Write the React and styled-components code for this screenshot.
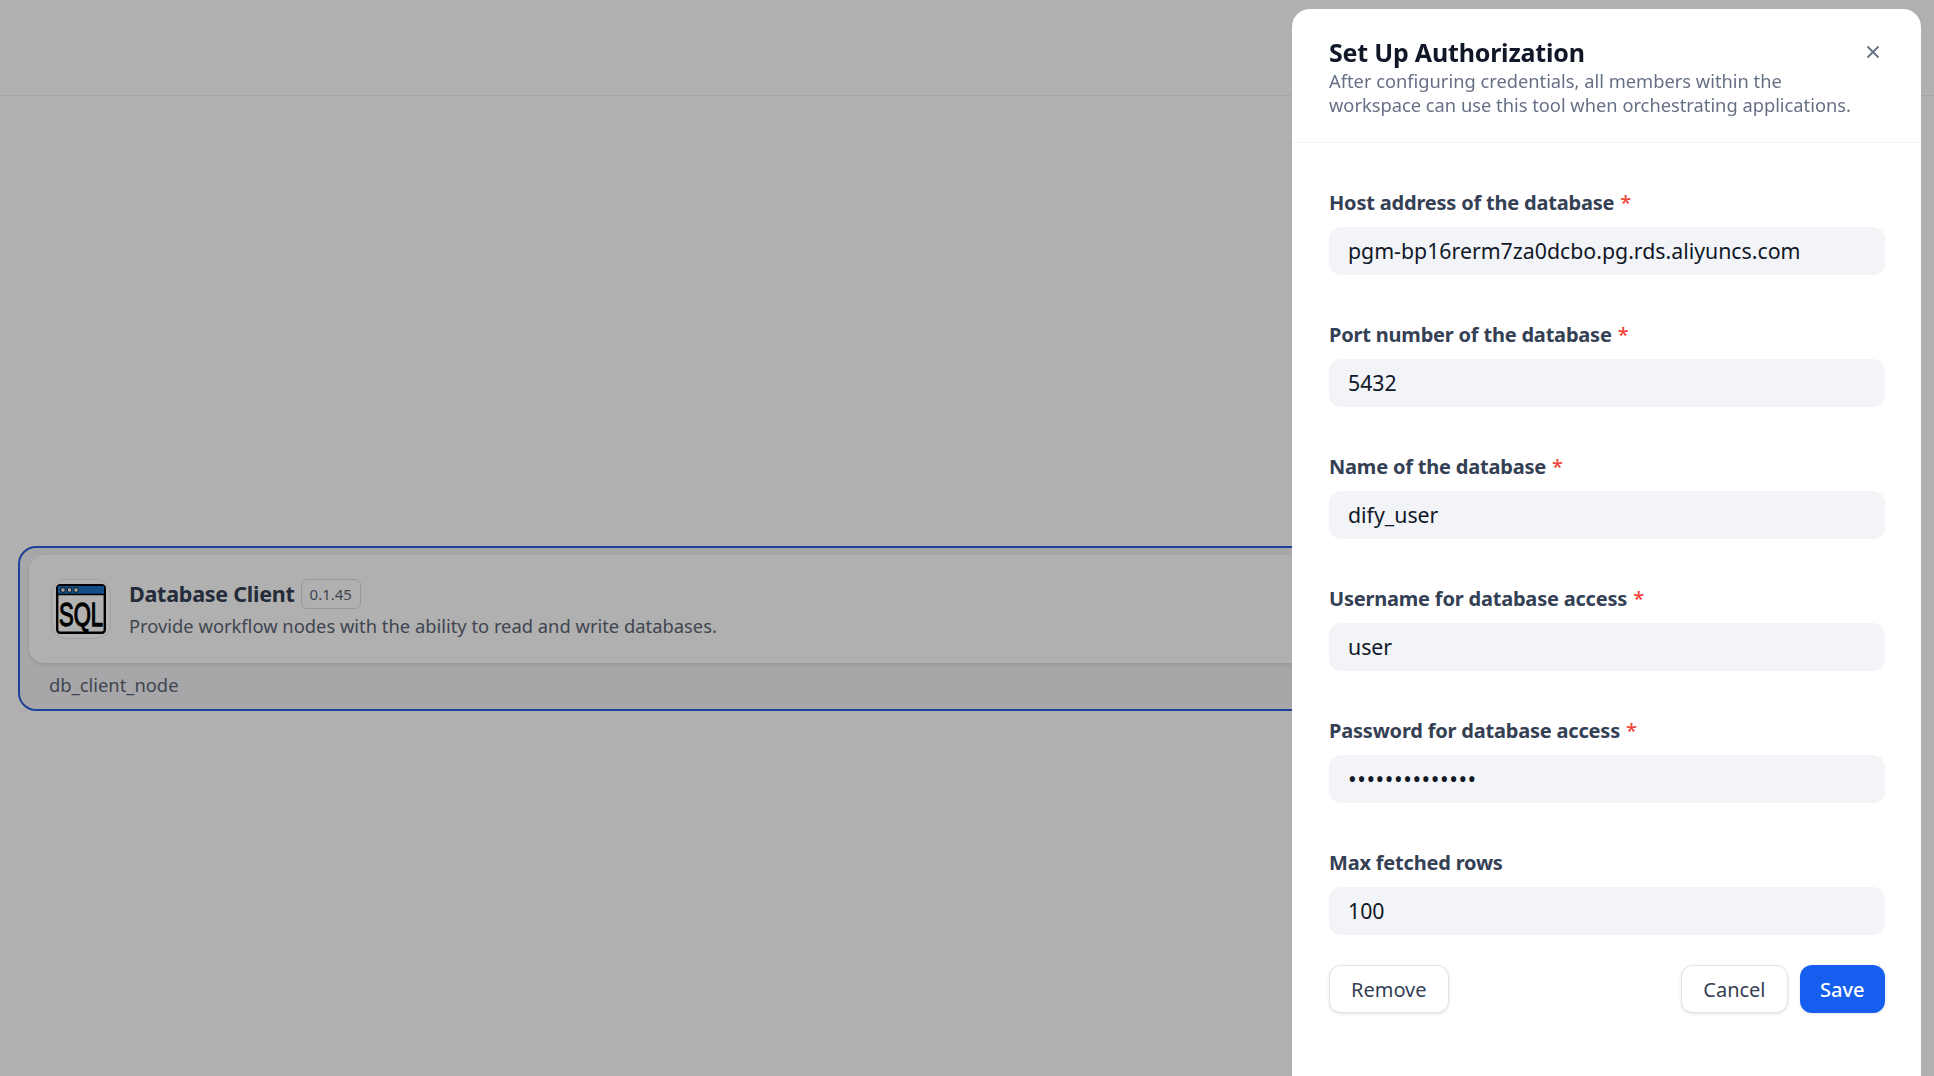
import React from "react";
import styled, { createGlobalStyle } from "styled-components";

const GlobalStyle = createGlobalStyle`
  html, body {
    margin: 0;
    padding: 0;
    height: 100%;
    background: #fff;
    overflow: hidden;
    font-family: "Noto Sans", "Open Sans", sans-serif;
  }
  * { box-sizing: border-box; }
`;

const Page = styled.div`
  height: 1076px;
  background: #fcfcfd;
  overflow: hidden;
`;

const TopBar = styled.div`
  height: 96px;
  border-bottom: 1px solid #eaecf0;
`;

const PluginList = styled.div`
  padding: 450px 0 0 18px;
`;

const PluginCard = styled.div`
  width: 1900px;
  height: 165px;
  padding: 7px 9px 0;
  border: 2px solid #2b5fd9;
  border-radius: 18px;
  background: #f0f0f2;
`;

const CardTop = styled.div`
  display: flex;
  gap: 18px;
  height: 108px;
  padding: 24px 22px;
  background: #fcfcfc;
  border-radius: 15px;
  box-shadow: 0 2px 4px rgba(16, 24, 40, 0.1);
`;

const IconBox = styled.div`
  flex: none;
  width: 60px;
  height: 60px;
  display: flex;
  align-items: center;
  justify-content: center;
  border: 1px solid #e9e9ec;
  border-radius: 15px;
  background: #fff;
`;

const CardText = styled.div`
  display: flex;
  flex-direction: column;
`;

const TitleRow = styled.div`
  display: flex;
  align-items: center;
  gap: 6px;
  height: 30px;
`;

const PluginName = styled.div`
  font-size: 21.5px;
  font-weight: 700;
  letter-spacing: -0.25px;
  line-height: 30px;
  color: #344054;
`;

const VersionBadge = styled.div`
  padding: 0 8px;
  height: 30px;
  line-height: 28px;
  font-size: 15px;
  color: #5b6473;
  border: 1px solid #d8dade;
  border-radius: 6px;
`;

const PluginDesc = styled.div`
  margin-top: 3px;
  font-size: 18.35px;
  line-height: 27px;
  color: #5b6473;
`;

const CardFoot = styled.div`
  padding: 8px 20px 0;
  font-size: 18.35px;
  line-height: 27px;
  color: #5b6473;
`;

const Overlay = styled.div`
  position: fixed;
  inset: 0;
  background: rgba(0, 0, 0, 0.3);
`;

const Panel = styled.div`
  position: fixed;
  top: 9px;
  right: 13px;
  bottom: 0;
  width: 629px;
  background: #fff;
  border-radius: 18px 18px 0 0;
`;

const PanelHead = styled.div`
  position: relative;
  height: 134px;
  padding: 27px 36px 0 37px;
  border-bottom: 1px solid #f2f4f7;
`;

const PanelTitle = styled.div`
  font-size: 25px;
  font-weight: 700;
  letter-spacing: -0.2px;
  line-height: 32px;
  color: #101828;
`;

const PanelDesc = styled.div`
  margin-top: 1px;
  font-size: 18.3px;
  line-height: 24px;
  color: #667085;
`;

const CloseButton = styled.button`
  position: absolute;
  top: 31px;
  right: 36px;
  width: 24px;
  height: 24px;
  padding: 0;
  border: 0;
  background: none;
  display: flex;
  align-items: center;
  justify-content: center;
  color: #667085;
`;

const Form = styled.div`
  display: flex;
  flex-direction: column;
  gap: 44px;
  padding: 44px 36px 0 37px;
`;

const Field = styled.div`
  display: flex;
  flex-direction: column;
`;

const Label = styled.div`
  height: 40px;
  font-size: 20px;
  font-weight: 700;
  letter-spacing: -0.2px;
  line-height: 32px;
  color: #344054;
`;

const Required = styled.span`
  margin-left: 6px;
  font-weight: 500;
  color: #f04438;
`;

const Input = styled.div`
  height: 48px;
  padding: 0 19px;
  font-size: ${(p) => (p.$secret ? "23px" : "21.3px")};
  letter-spacing: ${(p) => (p.$secret ? "0.55px" : "0")};
  line-height: 48px;
  color: #101828;
  background: #f2f4f7;
  border-radius: 12px;
`;

const Actions = styled.div`
  display: flex;
  align-items: center;
  gap: 12px;
  margin-top: 30px;
  padding: 0 36px 0 37px;
`;

const Spacer = styled.div`
  flex: 1;
`;

const Button = styled.button`
  height: 48px;
  padding: 0 ${(p) => (p.$primary ? "20.5px" : "21px")};
  font-family: inherit;
  font-size: 20px;
  font-weight: ${(p) => (p.$primary ? 500 : 400)};
  color: ${(p) => (p.$primary ? "#fff" : "#344054")};
  background: ${(p) => (p.$primary ? "#155eef" : "#fff")};
  border: ${(p) => (p.$primary ? "none" : "1px solid #e2e4e8")};
  border-radius: 12px;
  box-shadow: 0 1px 3px rgba(16, 24, 40, 0.12);
`;

const SqlIcon = () => (
  <svg width="50" height="50" viewBox="0 0 50 50">
    <rect x="1.2" y="1.2" width="47.6" height="47.6" rx="3" fill="#fff" stroke="#000" strokeWidth="2.4" />
    <rect x="2" y="2" width="46" height="8" fill="#1a6fc0" />
    <line x1="1" y1="10.5" x2="49" y2="10.5" stroke="#000" strokeWidth="1.6" />
    <circle cx="7" cy="6" r="2.3" fill="#e8e8e8" stroke="#000" strokeWidth="0.8" />
    <circle cx="13.5" cy="6" r="2.3" fill="#e8e8e8" stroke="#000" strokeWidth="0.8" />
    <circle cx="20" cy="6" r="2.3" fill="#e8e8e8" stroke="#000" strokeWidth="0.8" />
    <text
      transform="translate(3 42) scale(0.667 1)"
      fontFamily="Liberation Sans, sans-serif"
      fontSize="33"
      stroke="#000"
      strokeWidth="1.3"
      fill="#000"
    >
      SQL
    </text>
  </svg>
);

const fields = [
  { label: "Host address of the database", value: "pgm-bp16rerm7za0dcbo.pg.rds.aliyuncs.com", required: true },
  { label: "Port number of the database", value: "5432", required: true },
  { label: "Name of the database", value: "dify_user", required: true },
  { label: "Username for database access", value: "user", required: true },
  { label: "Password for database access", value: "••••••••••••••", required: true, secret: true },
  { label: "Max fetched rows", value: "100", required: false },
];

const App = () => {
  return (
    <Page>
      <GlobalStyle />
      <TopBar />
      <PluginList>
        <PluginCard>
          <CardTop>
            <IconBox>
              <SqlIcon />
            </IconBox>
            <CardText>
              <TitleRow>
                <PluginName>Database Client</PluginName>
                <VersionBadge>0.1.45</VersionBadge>
              </TitleRow>
              <PluginDesc>Provide workflow nodes with the ability to read and write databases.</PluginDesc>
            </CardText>
          </CardTop>
          <CardFoot>db_client_node</CardFoot>
        </PluginCard>
      </PluginList>
      <Overlay />
      <Panel>
        <PanelHead>
          <PanelTitle>Set Up Authorization</PanelTitle>
          <PanelDesc>
            After configuring credentials, all members within the
            <br />
            workspace can use this tool when orchestrating applications.
          </PanelDesc>
          <CloseButton aria-label="Close">
            <svg width="18" height="18" viewBox="0 0 18 18" fill="none" stroke="currentColor" strokeWidth="1.8">
              <path d="M3.5 3.5 14.5 14.5M14.5 3.5 3.5 14.5" />
            </svg>
          </CloseButton>
        </PanelHead>
        <Form>
          {fields.map((f) => (
            <Field key={f.label}>
              <Label>
                {f.label}
                {f.required && <Required>*</Required>}
              </Label>
              <Input $secret={f.secret}>{f.value}</Input>
            </Field>
          ))}
        </Form>
        <Actions>
          <Button>Remove</Button>
          <Spacer />
          <Button>Cancel</Button>
          <Button $primary>Save</Button>
        </Actions>
      </Panel>
    </Page>
  );
};

export default App;
